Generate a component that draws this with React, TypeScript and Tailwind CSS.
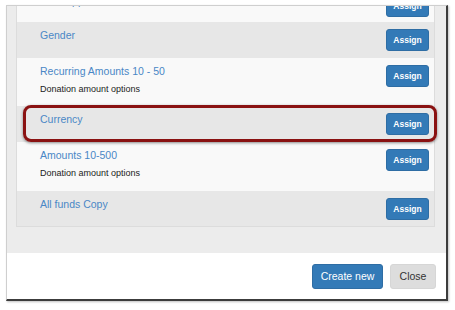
import * as React from 'react'

interface IFundRow {
    id: number,
    title: string,
    subtitle?: string,
    height: string
}

const rows: Array<IFundRow> = [
    { id: 0, title: "Tax Support", height: "h-[34px]" },
    { id: 1, title: "Gender", height: "h-[36px]" },
    { id: 2, title: "Recurring Amounts 10 - 50", subtitle: "Donation amount options", height: "h-[48px]" },
    { id: 3, title: "Currency", height: "h-[36px]" },
    { id: 4, title: "Amounts 10-500", subtitle: "Donation amount options", height: "h-[49px]" },
    { id: 5, title: "All funds Copy", height: "h-[35px]" }
];

export default class App extends React.Component<{}, {}> {
    render() {
        return (
            <div className="relative w-[455px] h-[310px] bg-white overflow-hidden font-['Liberation_Sans',Arial,sans-serif]">
                <div className="mt-[5px] ml-[6px] w-[442px] h-[296px] border-l border-t border-[#cfcfcf] border-r-2 border-b-2 border-r-[#3c3c3c] border-b-[#3c3c3c] shadow-[1px_1px_2px_rgba(0,0,0,0.25)] flex flex-col">
                    <div className="h-[247px] bg-[#ececec] pl-[9px] pr-[11px] overflow-hidden">
                        <div className="mt-[-18px] border border-[#dcdcdc] border-t-0">
                            {rows.map((r, i) =>
                                <div key={r.id} className={"flex justify-between pl-[23px] pr-[5px] pt-[6px] " + r.height + (i % 2 == 0 ? " bg-[#f9f9f9]" : " bg-[#e7e7e7]")}>
                                    <div className="flex flex-col">
                                        <span className="text-[10.5px] leading-[14px] text-[#4a87c6]">{r.title}</span>
                                        {r.subtitle && <span className="mt-[5px] text-[9px] leading-[12px] text-[#222]">{r.subtitle}</span>}
                                    </div>
                                    <button className="mt-[1px] w-[43px] h-[22px] rounded-[3px] bg-[#337ab7] border border-[#2e6da4] text-white text-[8.5px] font-bold">Assign</button>
                                </div>
                            )}
                        </div>
                    </div>
                    <div className="flex-1 bg-white flex justify-end items-start gap-[7px] pt-[11px] pr-[10px]">
                        <button className="w-[71px] h-[25px] rounded-[3px] bg-[#337ab7] border border-[#2e6da4] text-white text-[10.5px]">Create new</button>
                        <button className="w-[46px] h-[25px] rounded-[3px] bg-[#dddddd] border border-[#d6d6d6] text-[#333] text-[10.5px]">Close</button>
                    </div>
                </div>
                <div className="absolute left-[23px] top-[105px] w-[414px] h-[37px] rounded-[8px] border-[3px] border-[#8a1212] shadow-[0_1px_3px_rgba(0,0,0,0.45)]"></div>
            </div>
        )
    }
}
